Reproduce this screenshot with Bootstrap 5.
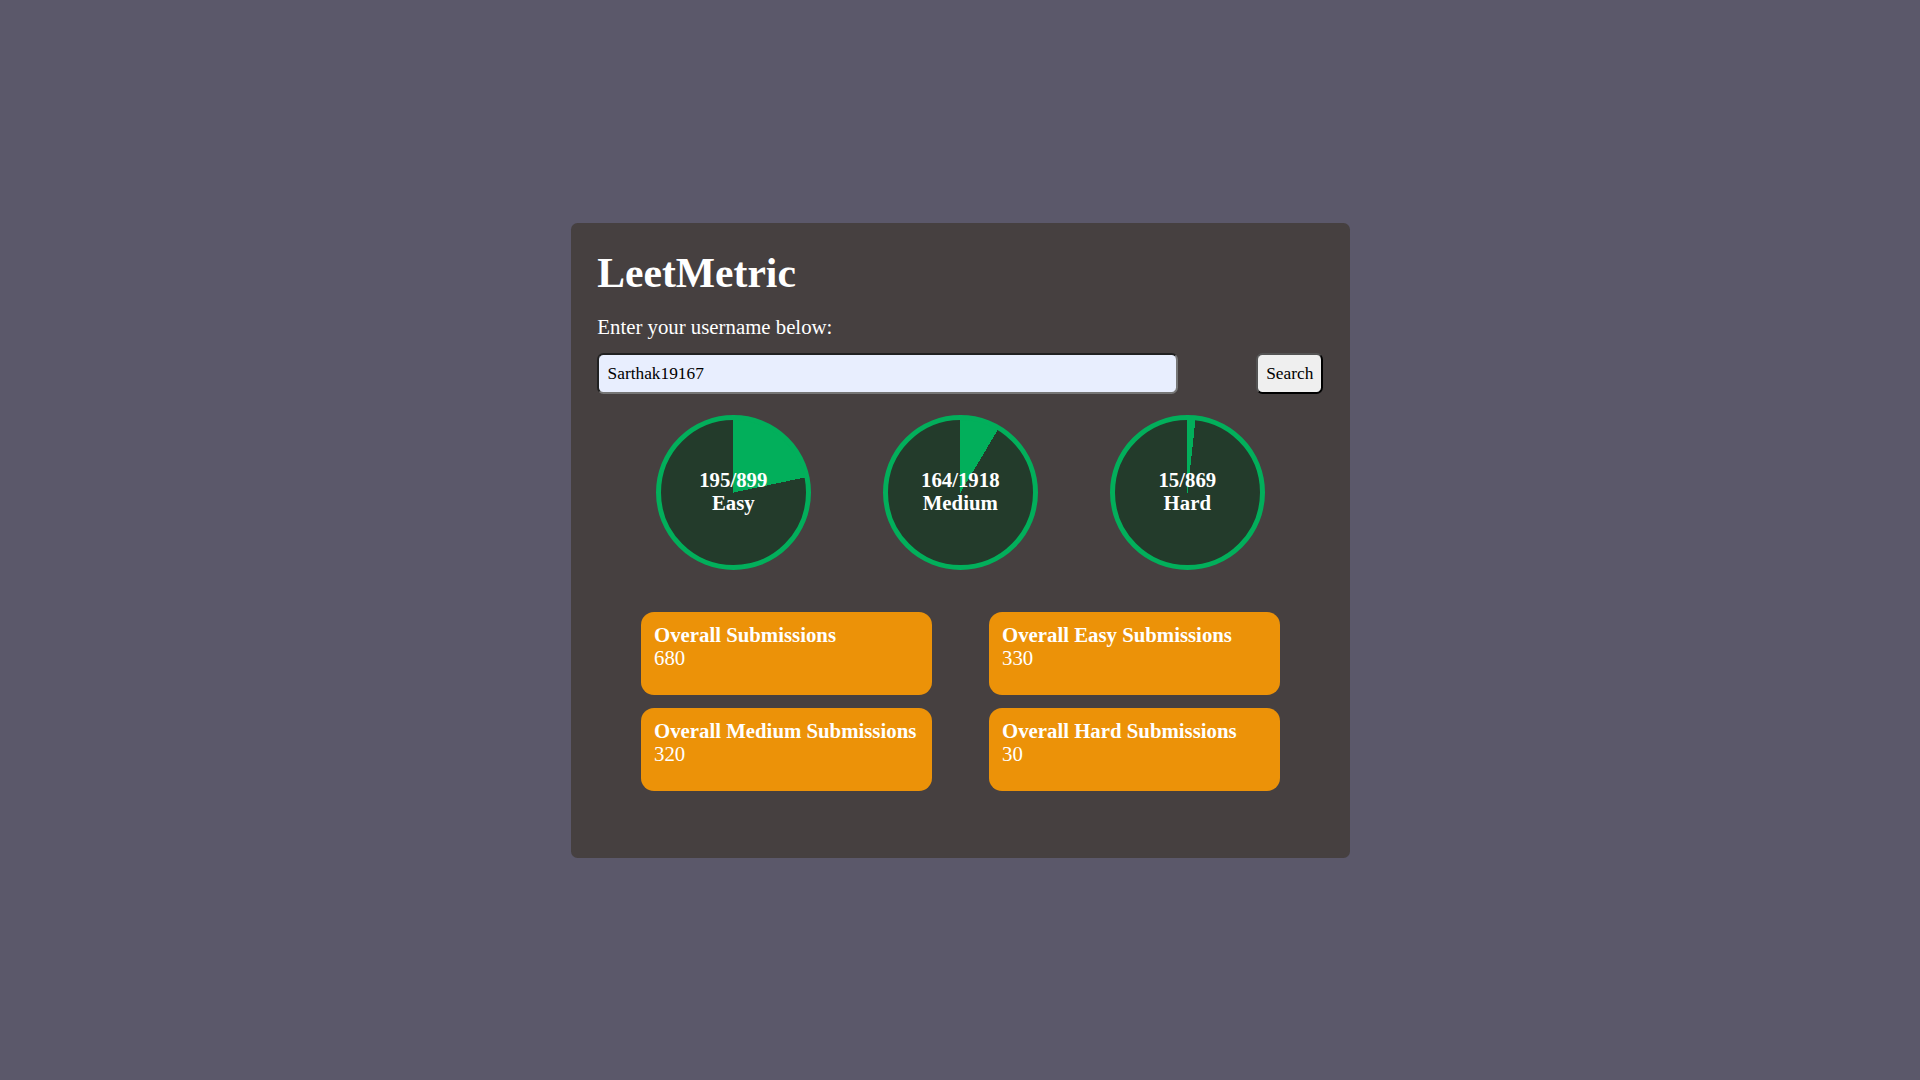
<!DOCTYPE html>
<html lang="en">
<head>
<meta charset="utf-8">
<meta name="viewport" content="width=device-width, initial-scale=1">
<title>LeetMetric</title>
<link href="https://cdn.jsdelivr.net/npm/bootstrap@5.3.0/dist/css/bootstrap.min.css" rel="stylesheet">
<style>
body{background:#5b586a;font-family:"Liberation Serif",serif;font-size:20.8px;line-height:23px;color:#fff}
.panel{width:779px;height:635px;padding:26.4px 26.2px 26px 26.8px;background:#464040;border-radius:6.5px}
.panel h1{font-size:41.6px;line-height:48px;font-weight:700;margin:0 0 18px}
.panel label{line-height:24px;margin-bottom:14px}
.user-input{width:580.8px;height:41px;padding:1px 8px 0 8.3px;border:2px inset #767676;border-radius:6.5px;background:#e8eefe;color:#000;font-size:17.333px;outline:0}
.search-btn{width:67px;height:41px;padding:0;border:2px outset #000;border-radius:6.5px;background:#efefef;color:#000;font-size:17.333px}
.rings{gap:72px;margin-top:21px}
.ring{width:155px;height:155px;padding-bottom:3px;border:5px solid #02af5b;background:conic-gradient(#02af5b var(--done),#233b2b 0)}
.stats{gap:13px 57px;margin-top:42px}
.stat{width:291px;height:83px;padding:11px 13.2px;border-radius:13px;background:#ec9208}
</style>
<script src="https://cdn.jsdelivr.net/npm/bootstrap@5.3.0/dist/js/bootstrap.bundle.min.js"></script>
</head>
<body class="d-flex justify-content-center align-items-center vh-100">
<main class="panel">
<h1>LeetMetric</h1>
<label class="d-block" for="user">Enter your username below:</label>
<div class="d-flex justify-content-between">
<input class="user-input" id="user" type="text" value="Sarthak19167">
<button class="search-btn" type="button">Search</button>
</div>
<div class="rings d-flex justify-content-center text-center fw-bold">
<div class="ring rounded-circle d-flex flex-column align-items-center justify-content-center" style="--done:21.69%"><span>195/899</span><span>Easy</span></div>
<div class="ring rounded-circle d-flex flex-column align-items-center justify-content-center" style="--done:8.55%"><span>164/1918</span><span>Medium</span></div>
<div class="ring rounded-circle d-flex flex-column align-items-center justify-content-center" style="--done:1.73%"><span>15/869</span><span>Hard</span></div>
</div>
<div class="stats d-flex flex-wrap justify-content-center">
<div class="stat"><div class="fw-bold">Overall Submissions</div><div>680</div></div>
<div class="stat"><div class="fw-bold">Overall Easy Submissions</div><div>330</div></div>
<div class="stat"><div class="fw-bold text-nowrap">Overall Medium Submissions</div><div>320</div></div>
<div class="stat"><div class="fw-bold">Overall Hard Submissions</div><div>30</div></div>
</div>
</main>
</body>
</html>
